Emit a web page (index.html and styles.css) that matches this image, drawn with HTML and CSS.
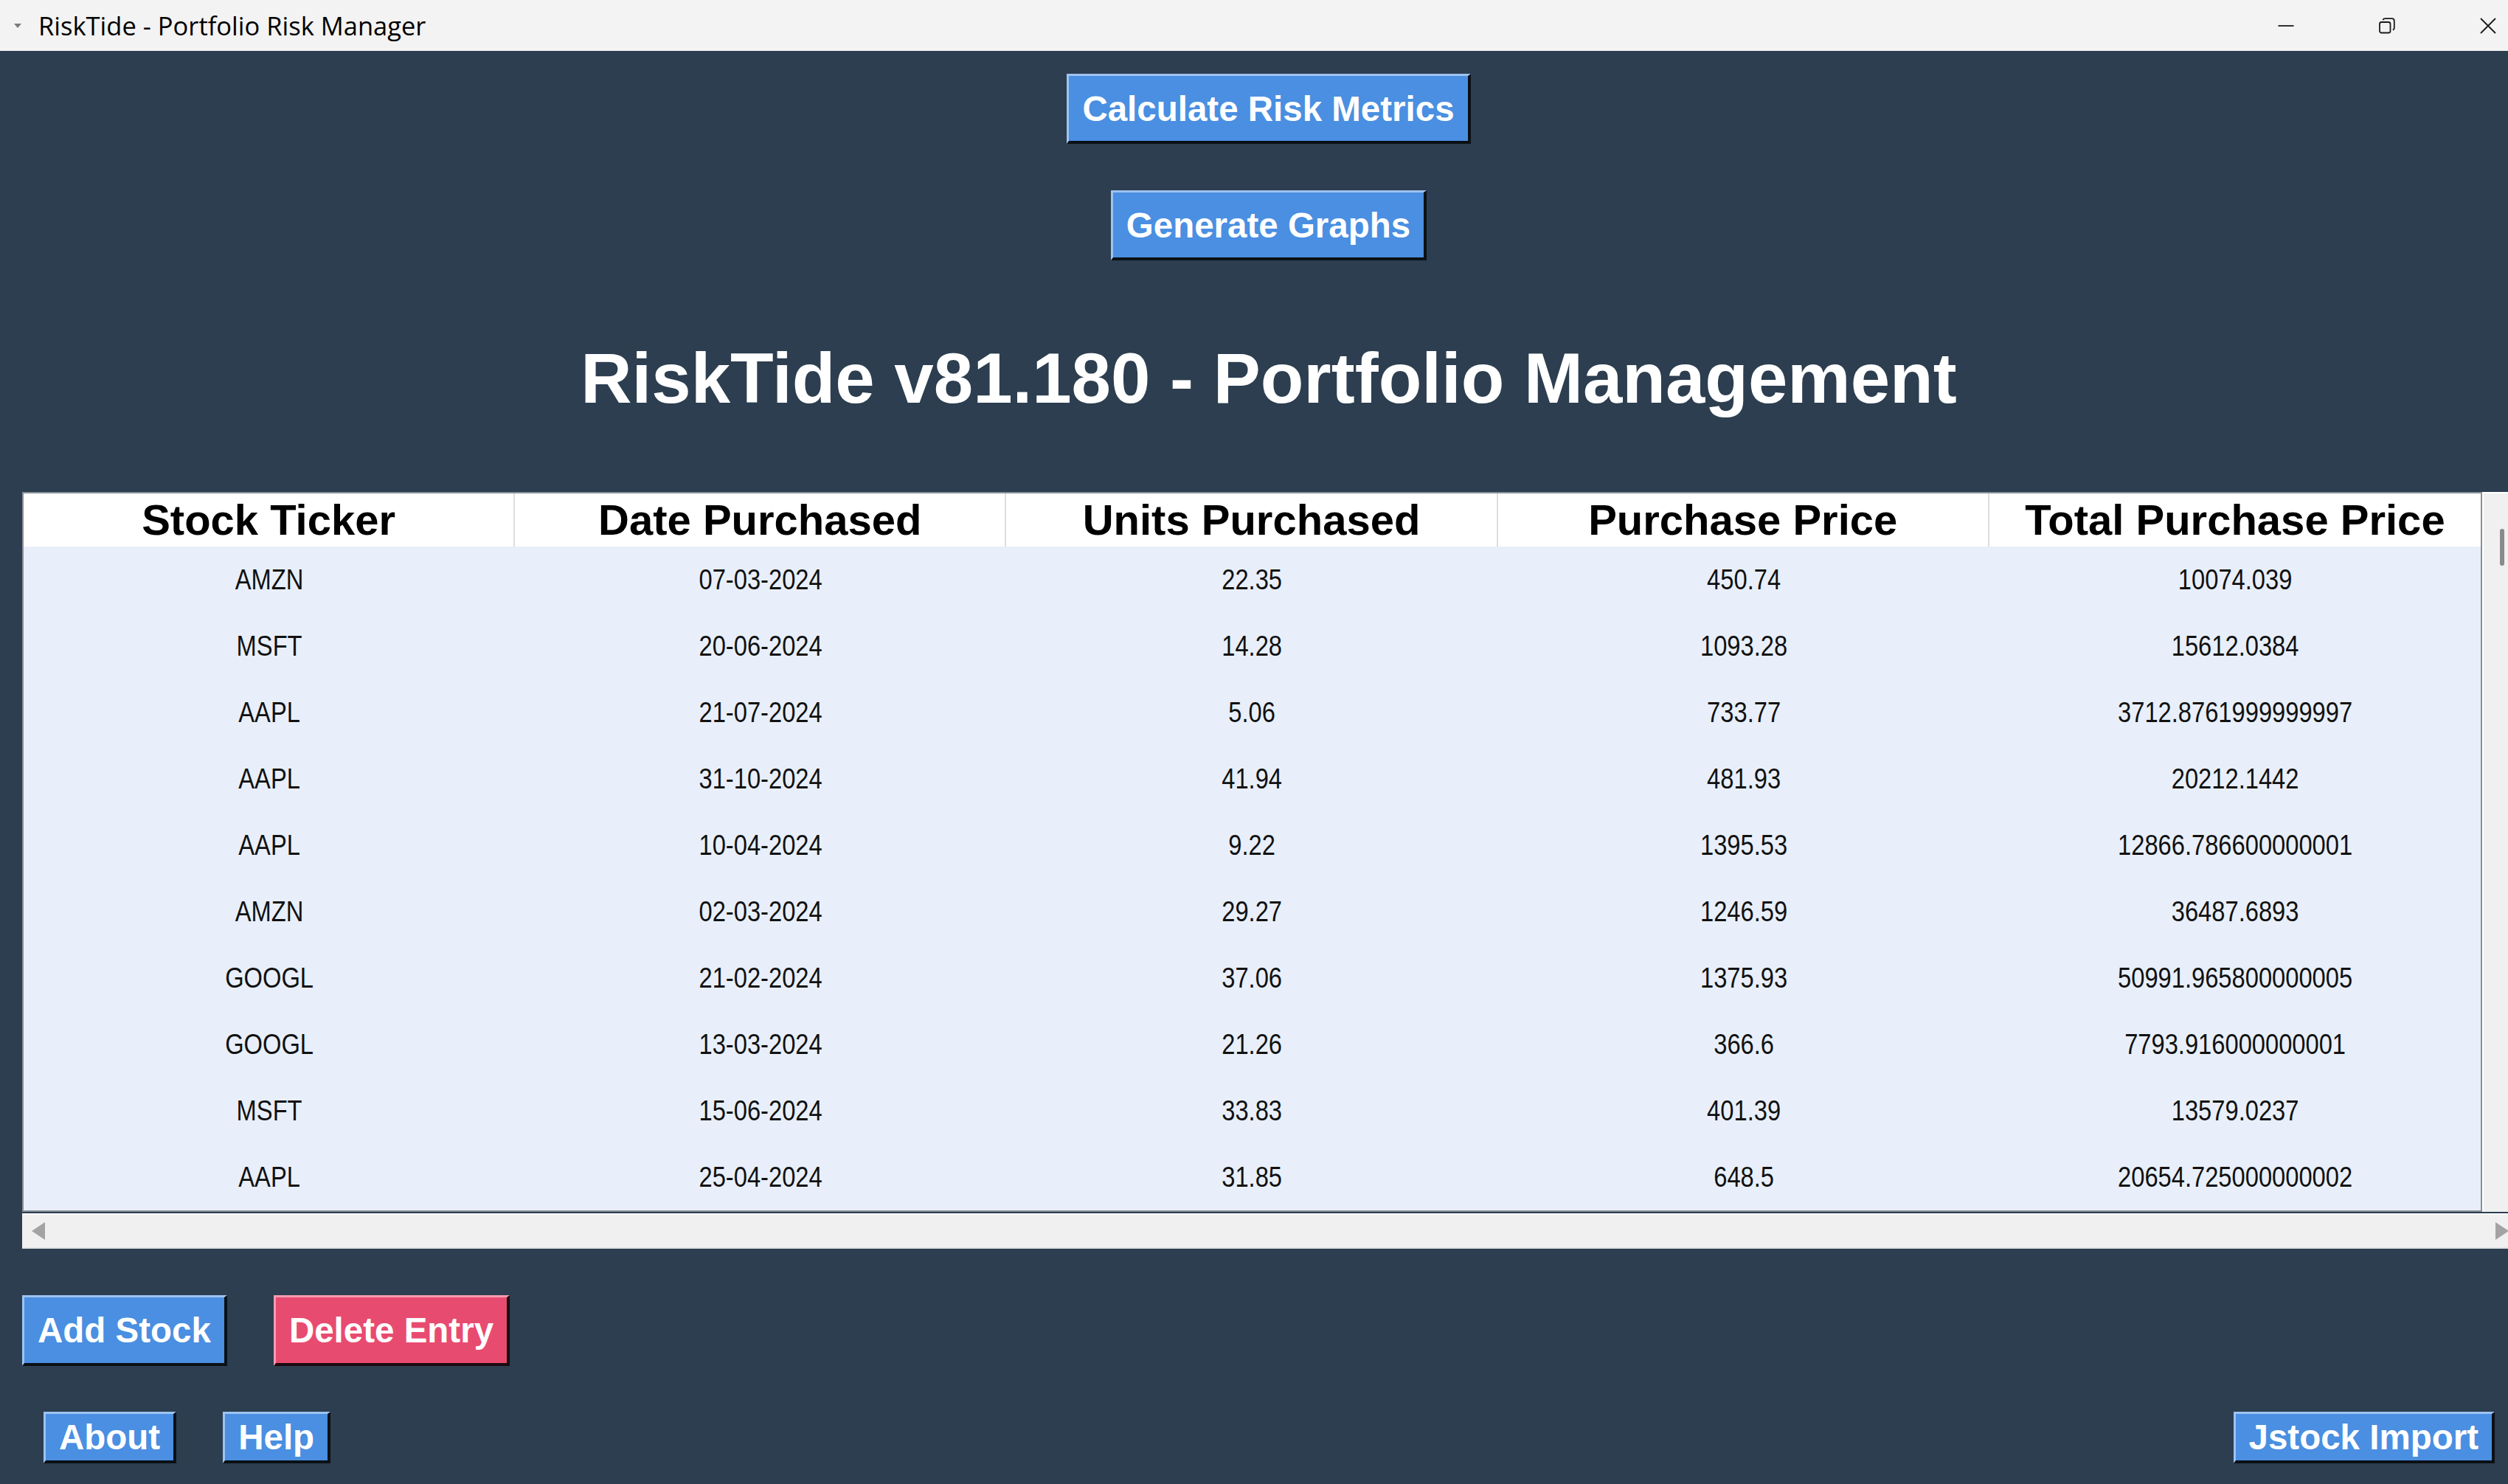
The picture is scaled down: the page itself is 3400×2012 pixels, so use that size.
FILE: index.html
```html
<!DOCTYPE html>
<html lang="en">
<head>
<meta charset="utf-8">
<title>RiskTide - Portfolio Risk Manager</title>
<link rel="stylesheet" href="styles.css">
</head>
<body>
<div class="titlebar">
  <svg class="app-icon" viewBox="0 0 10 8" width="10" height="8"><polygon points="0,1 10,1 5,7" fill="#7a7a7a"/></svg>
  <span class="window-title">RiskTide - Portfolio Risk Manager</span>
  <div class="controls">
    <div class="ctl"><svg width="22" height="22" viewBox="0 0 22 22"><line x1="0.5" y1="11" x2="21.5" y2="11" stroke="#1a1a1a" stroke-width="1.8"/></svg></div>
    <div class="ctl"><svg width="22" height="22" viewBox="0 0 22 22"><rect x="1" y="6" width="14.5" height="14.5" rx="2.5" fill="none" stroke="#1a1a1a" stroke-width="1.8"/><path d="M5.5 3.2 Q6 1.2 8.5 1.2 H17.5 Q20.8 1.2 20.8 4.5 V13.5 Q20.8 16 18.8 16.5" fill="none" stroke="#1a1a1a" stroke-width="1.8"/></svg></div>
    <div class="ctl"><svg width="22" height="22" viewBox="0 0 22 22"><path d="M1 1 L21 21 M21 1 L1 21" stroke="#1a1a1a" stroke-width="1.8"/></svg></div>
  </div>
</div>
<div class="app">
  <button class="btn btn-top btn-calc">Calculate Risk Metrics</button>
  <button class="btn btn-top btn-graphs">Generate Graphs</button>
  <h1 class="heading">RiskTide v81.180 - Portfolio Management</h1>
  <div class="table-wrap">
    <div class="tree">
      <div class="tree-head">
        <div class="th">Stock Ticker</div>
        <div class="th">Date Purchased</div>
        <div class="th">Units Purchased</div>
        <div class="th">Purchase Price</div>
        <div class="th">Total Purchase Price</div>
      </div>
      <div class="tr"><div class="td">AMZN</div><div class="td">07-03-2024</div><div class="td">22.35</div><div class="td">450.74</div><div class="td">10074.039</div></div>
      <div class="tr"><div class="td">MSFT</div><div class="td">20-06-2024</div><div class="td">14.28</div><div class="td">1093.28</div><div class="td">15612.0384</div></div>
      <div class="tr"><div class="td">AAPL</div><div class="td">21-07-2024</div><div class="td">5.06</div><div class="td">733.77</div><div class="td">3712.8761999999997</div></div>
      <div class="tr"><div class="td">AAPL</div><div class="td">31-10-2024</div><div class="td">41.94</div><div class="td">481.93</div><div class="td">20212.1442</div></div>
      <div class="tr"><div class="td">AAPL</div><div class="td">10-04-2024</div><div class="td">9.22</div><div class="td">1395.53</div><div class="td">12866.786600000001</div></div>
      <div class="tr"><div class="td">AMZN</div><div class="td">02-03-2024</div><div class="td">29.27</div><div class="td">1246.59</div><div class="td">36487.6893</div></div>
      <div class="tr"><div class="td">GOOGL</div><div class="td">21-02-2024</div><div class="td">37.06</div><div class="td">1375.93</div><div class="td">50991.965800000005</div></div>
      <div class="tr"><div class="td">GOOGL</div><div class="td">13-03-2024</div><div class="td">21.26</div><div class="td">366.6</div><div class="td">7793.916000000001</div></div>
      <div class="tr"><div class="td">MSFT</div><div class="td">15-06-2024</div><div class="td">33.83</div><div class="td">401.39</div><div class="td">13579.0237</div></div>
      <div class="tr"><div class="td">AAPL</div><div class="td">25-04-2024</div><div class="td">31.85</div><div class="td">648.5</div><div class="td">20654.725000000002</div></div>
    </div>
    <div class="vscroll"><div class="thumb"></div></div>
  </div>
  <div class="hscroll">
    <svg width="18" height="24" viewBox="0 0 18 24"><polygon points="18,0 18,24 0,12" fill="#a3a3a3"/></svg>
    <svg width="18" height="24" viewBox="0 0 18 24"><polygon points="0,0 0,24 18,12" fill="#a3a3a3"/></svg>
  </div>
  <div class="actions">
    <button class="btn btn-lg">Add Stock</button>
    <button class="btn btn-lg btn-danger">Delete Entry</button>
  </div>
  <div class="footer">
    <button class="btn btn-sm">About</button>
    <button class="btn btn-sm">Help</button>
    <button class="btn btn-sm btn-import">Jstock Import</button>
  </div>
</div>
</body>
</html>
```
FILE: styles.css
```css
* { box-sizing: border-box; }
html, body { margin: 0; padding: 0; }
body {
  width: 3400px;
  height: 2012px;
  overflow: hidden;
  background: #2c3e50;
  font-family: "Liberation Sans", Arial, sans-serif;
}
.titlebar {
  width: 3400px;
  height: 69px;
  background: #f3f3f3;
  display: flex;
  align-items: center;
}
.app-icon { margin-left: 19px; margin-right: 23px; flex: none; }
.window-title {
  font-family: "Open Sans", "Noto Sans", sans-serif;
  font-size: 34.5px;
  line-height: 47px;
  color: #000;
}
.controls { margin-left: auto; display: flex; gap: 83px; }
.ctl { width: 54px; height: 69px; display: flex; align-items: center; justify-content: center; }
.app {
  width: 3440px;
  display: flex;
  flex-direction: column;
  align-items: center;
}
.btn {
  font-family: "Liberation Sans", Arial, sans-serif;
  font-weight: bold;
  font-size: 47.5px;
  line-height: 55px;
  color: #fff;
  background: #4a8fe1;
  border-style: solid;
  border-width: 3px 4px 4px 3px;
  border-color: #9ec3f1 #0b1016 #0b1016 #9ec3f1;
  padding: 17px 18px 16px;
  margin: 0;
  cursor: pointer;
}
.btn-calc { margin-top: 31px; }
.btn-graphs { margin-top: 63px; }
.btn-lg { padding: 17px 18px 17px; }
.btn-sm { padding: 4px 18px 4px; }
.btn-danger {
  background: #e84b70;
  border-color: #f59bb0 #1c0a10 #1c0a10 #f59bb0;
}
.heading {
  margin: 105px 0 0;
  font-size: 96px;
  line-height: 110px;
  font-weight: bold;
  color: #fff;
  text-align: center;
}
.table-wrap {
  align-self: stretch;
  margin-top: 99px;
  padding: 0 30px;
  display: flex;
}
.tree {
  flex: 1;
  border: 2px solid #8a8f96;
  background: #e8effa;
}
.tree-head {
  display: grid;
  grid-template-columns: repeat(5, 1fr);
  height: 72px;
  background: #fff;
}
.th {
  font-weight: bold;
  font-size: 58px;
  line-height: 72px;
  text-align: center;
  color: #000;
  border-right: 2px solid #dddddd;
  white-space: nowrap;
}
.th:last-child { border-right: none; }
.tr {
  display: grid;
  grid-template-columns: repeat(5, 1fr);
  height: 90px;
  align-items: center;
}
.td {
  text-align: center;
  font-family: "Liberation Sans", Arial, sans-serif;
  font-size: 38px;
  color: #111;
  white-space: nowrap;
  transform: scaleX(0.86);
}
.vscroll {
  width: 45px;
  background: #f0f0f0;
  border-left: 2px solid #ffffff;
  border-top: 2px solid #ffffff;
}
.thumb {
  margin: 48px 0 0 22px;
  width: 6px;
  height: 50px;
  background: #8a8a8a;
  border-radius: 3px;
}
.hscroll {
  align-self: stretch;
  margin: 2px 30px 0;
  height: 48px;
  background: #f0f0f0;
  border-top: 2px solid #ffffff;
  border-bottom: 2px solid #e2e2e2;
  display: flex;
  align-items: center;
  justify-content: space-between;
  padding: 0 9px 0 13px;
}
.actions {
  align-self: stretch;
  display: flex;
  gap: 63px;
  padding-left: 30px;
  margin-top: 63px;
}
.footer {
  align-self: stretch;
  display: flex;
  gap: 63px;
  padding: 0 58px 0 59px;
  margin-top: 62px;
}
.btn-import { margin-left: auto; }
```
